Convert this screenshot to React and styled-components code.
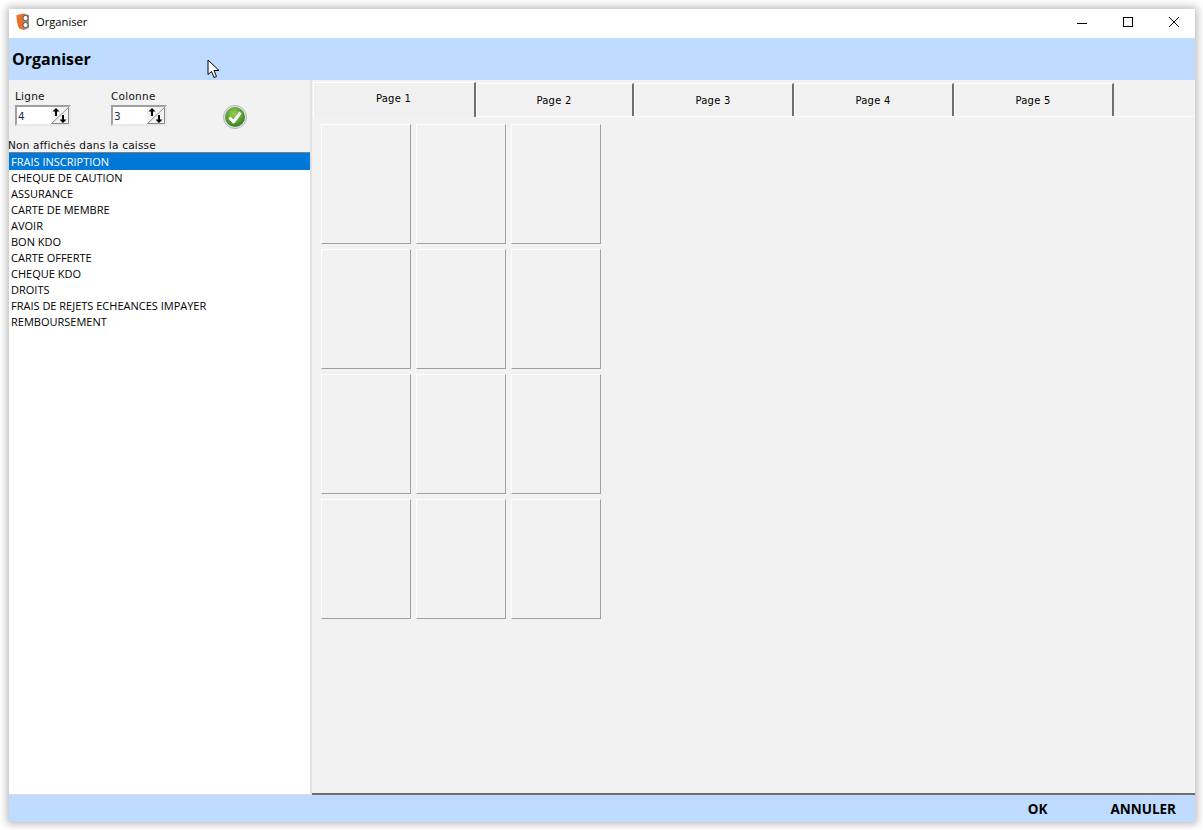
import styled, { createGlobalStyle } from "styled-components";

const GlobalStyle = createGlobalStyle`
  html, body { margin: 0; padding: 0; background: #fff; }
  body { font-family: "DejaVu Sans", Tahoma, sans-serif; color: #000; }
`;

const Page = styled.div`
  width: 1203px;
  height: 830px;
  padding: 9px 8px 8px 9px;
  box-sizing: border-box;
  overflow: hidden;
`;

const Window = styled.div`
  position: relative;
  height: 813px;
  display: flex;
  flex-direction: column;
  background: #f2f2f2;
  box-shadow: 0 0 8px 2px rgba(0, 0, 0, 0.28);
`;

const TitleBar = styled.div`
  height: 29px;
  flex: none;
  display: flex;
  align-items: center;
  box-sizing: border-box;
  background: #fff;
  padding: 0 0 4px 7px;
`;

const AppTitle = styled.span`
  margin-left: 6px;
  font-family: "Open Sans", sans-serif;
  font-size: 11.2px;
`;

const Controls = styled.div`
  margin-left: auto;
  display: flex;
  height: 100%;
  margin-right: -2px;
`;

const ControlButton = styled.div`
  width: 46px;
  display: flex;
  align-items: center;
  justify-content: center;
`;

const Header = styled.div`
  height: 42px;
  flex: none;
  display: flex;
  align-items: center;
  padding: 0 3px 1px;
  box-sizing: border-box;
  background: #bfdbff;
  font-family: "Open Sans", sans-serif;
  font-size: 16px;
  font-weight: 700;
`;

const Cursor = styled.svg`
  position: absolute;
  left: 198px;
  top: 50px;
`;

const Body = styled.div`
  flex: 1;
  min-height: 0;
  display: flex;
`;

const LeftPanel = styled.div`
  width: 303px;
  flex: none;
  display: flex;
  flex-direction: column;
  box-sizing: border-box;
  border-right: 2px solid #e2e2e2;
  border-bottom: 1px solid #dcdcdc;
`;

const SpinRow = styled.div`
  height: 58px;
  flex: none;
  padding: 10px 0 0 6px;
  box-sizing: border-box;
  display: flex;
`;

const SpinField = styled.div`
  width: 96px;
  display: flex;
  flex-direction: column;
`;

const SpinLabel = styled.label`
  font-size: 10.5px;
  letter-spacing: 0.25px;
  line-height: 13px;
  height: 15px;
  color: #111;
`;

const SpinBox = styled.div`
  width: 56px;
  height: 21px;
  box-sizing: border-box;
  display: flex;
  align-items: center;
  justify-content: space-between;
  background: #fff;
  border: 2px solid #a0a0a0;
  border-right-color: #e8e8e8;
  border-bottom-color: #e8e8e8;
  font-size: 10.5px;
  padding-left: 1px;
  color: #22314a;
`;

const SpinButton = styled.svg`
  flex: none;
  background: #f2f2f2;
`;

const ConfirmIcon = styled.svg`
  margin: 15px 0 0 16px;
`;

const ListCaption = styled.div`
  height: 14px;
  flex: none;
  margin-left: -1px;
  font-size: 10.5px;
  letter-spacing: 0.2px;
  line-height: 14px;
  color: #111;
  white-space: nowrap;
`;

const List = styled.ul`
  flex: 1;
  margin: 0;
  padding: 0;
  list-style: none;
  background: #fff;
  border-top: 1px solid #808080;
`;

const ListRow = styled.li`
  height: ${({ $selected }) => ($selected ? "17px" : "16px")};
  padding-left: 2px;
  font-family: "Open Sans", sans-serif;
  font-size: 11px;
  line-height: ${({ $selected }) => ($selected ? "17px" : "16px")};
  white-space: nowrap;
  color: ${({ $selected }) => ($selected ? "#fff" : "#000")};
  background: ${({ $selected }) => ($selected ? "#0078d7" : "transparent")};
`;

const RightPanel = styled.div`
  flex: 1;
  min-width: 0;
  display: flex;
  flex-direction: column;
  border-bottom: 2px solid #707070;
`;

const TabStrip = styled.div`
  height: 34px;
  margin: 2px 0 0 1px;
  flex: none;
  display: flex;
  border-bottom: 1px solid #fff;
`;

const Tab = styled.div`
  width: ${({ $w }) => $w}px;
  box-sizing: border-box;
  display: flex;
  align-items: center;
  justify-content: center;
  font-size: 10px;
  letter-spacing: 0.2px;
  background: ${({ $active }) => ($active ? "#f0f0f0" : "#f2f2f2")};
  border-top: 1px solid #fff;
  border-left: 1px solid #fff;
  border-right: 2px solid #707070;
  padding-right: 1px;
  margin-top: ${({ $active }) => ($active ? "0" : "1px")};
  padding-bottom: ${({ $active }) => ($active ? "4px" : "0")};
  margin-bottom: ${({ $active }) => ($active ? "-1px" : "0")};
`;

const GridArea = styled.div`
  flex: 1;
  padding: 7px 0 0 9px;
  display: grid;
  grid-template-columns: repeat(3, 90px);
  grid-auto-rows: 120px;
  gap: 5px;
  align-content: start;
`;

const Cell = styled.div`
  box-sizing: border-box;
  background: #f2f2f2;
  border: 1px solid #fff;
  border-right-color: #a0a0a0;
  border-bottom-color: #a0a0a0;
`;

const Footer = styled.div`
  height: 27px;
  flex: none;
  display: flex;
  align-items: center;
  justify-content: flex-end;
  padding-right: 19px;
  gap: 63px;
  background: #bfdbff;
  font-family: "Open Sans", sans-serif;
  font-size: 13.5px;
  font-weight: 700;
`;

const SpinArrows = () => (
  <SpinButton width="18" height="17" viewBox="0 0 18 17">
    <path d="M0.5 16.5 L17.5 0.5 V16.5 Z" fill="#f2f2f2" stroke="#8a8a8a" />
    <path d="M5 1 L8.5 4.5 H6 V9 H4 V4.5 H1.5 Z" fill="#000" />
    <path d="M12 16 L8.5 12.5 H11 V8 H13 V12.5 H15.5 Z" fill="#000" />
  </SpinButton>
);

const items = [
  "FRAIS INSCRIPTION",
  "CHEQUE DE CAUTION",
  "ASSURANCE",
  "CARTE DE MEMBRE",
  "AVOIR",
  "BON KDO",
  "CARTE OFFERTE",
  "CHEQUE KDO",
  "DROITS",
  "FRAIS DE REJETS ECHEANCES IMPAYER",
  "REMBOURSEMENT",
];

const tabs = [
  ["Page 1", 163],
  ["Page 2", 158],
  ["Page 3", 160],
  ["Page 4", 160],
  ["Page 5", 160],
];

const App = () => (
  <Page>
    <GlobalStyle />
    <Window>
      <TitleBar>
        <svg width="14" height="18" viewBox="0 0 14 18">
          <path d="M0.5 2 L8 0.5 V17 L3 15.5 Q0.5 10 0.5 2 Z" fill="#e8702a" />
          <path d="M8 0.5 L13 2 V15 L8 17 Z" fill="#9a8f88" />
          <circle cx="9.5" cy="5" r="2.6" fill="#fff" stroke="#555" />
          <circle cx="9.5" cy="12" r="2.6" fill="#fff" stroke="#555" />
        </svg>
        <AppTitle>Organiser</AppTitle>
        <Controls>
          <ControlButton>
            <svg width="12" height="12" viewBox="0 0 12 12">
              <path d="M1 7.5 H11" stroke="#000" />
            </svg>
          </ControlButton>
          <ControlButton>
            <svg width="12" height="12" viewBox="0 0 12 12">
              <rect x="1.5" y="1.5" width="9" height="9" stroke="#000" fill="none" />
            </svg>
          </ControlButton>
          <ControlButton>
            <svg width="12" height="12" viewBox="0 0 12 12">
              <path d="M1 1 L11 11 M11 1 L1 11" stroke="#000" fill="none" />
            </svg>
          </ControlButton>
        </Controls>
      </TitleBar>
      <Header>Organiser</Header>
      <Cursor width="14" height="20" viewBox="0 0 14 20">
        <path
          d="M1 1 V15.5 L4.5 12.5 L7 18.5 L9.5 17.5 L7 11.5 H12 Z"
          fill="#fff"
          stroke="#000"
          strokeLinejoin="round"
        />
      </Cursor>
      <Body>
        <LeftPanel>
          <SpinRow>
            <SpinField>
              <SpinLabel>Ligne</SpinLabel>
              <SpinBox>
                4
                <SpinArrows />
              </SpinBox>
            </SpinField>
            <SpinField>
              <SpinLabel>Colonne</SpinLabel>
              <SpinBox>
                3
                <SpinArrows />
              </SpinBox>
            </SpinField>
            <ConfirmIcon width="24" height="24" viewBox="0 0 24 24">
              <defs>
                <radialGradient id="ok" cx="45%" cy="35%" r="70%">
                  <stop offset="0%" stopColor="#9bd04f" />
                  <stop offset="100%" stopColor="#2c7a22" />
                </radialGradient>
              </defs>
              <circle cx="12" cy="12" r="11.5" fill="#e4e4e4" stroke="#b5b5b5" />
              <circle cx="12" cy="12" r="10" fill="url(#ok)" />
              <path
                d="M6.5 12.5 L10.5 17 L17.5 7.5"
                fill="none"
                stroke="#fff"
                strokeWidth="3"
                strokeLinejoin="round"
              />
            </ConfirmIcon>
          </SpinRow>
          <ListCaption>Non affichés dans la caisse</ListCaption>
          <List>
            {items.map((item, i) => (
              <ListRow key={item} $selected={i === 0}>
                {item}
              </ListRow>
            ))}
          </List>
        </LeftPanel>
        <RightPanel>
          <TabStrip>
            {tabs.map(([label, w], i) => (
              <Tab key={label} $w={w} $active={i === 0}>
                {label}
              </Tab>
            ))}
          </TabStrip>
          <GridArea>
            {Array.from({ length: 12 }, (_, i) => (
              <Cell key={i} />
            ))}
          </GridArea>
        </RightPanel>
      </Body>
      <Footer>
        <span>OK</span>
        <span>ANNULER</span>
      </Footer>
    </Window>
  </Page>
);

export default App;
